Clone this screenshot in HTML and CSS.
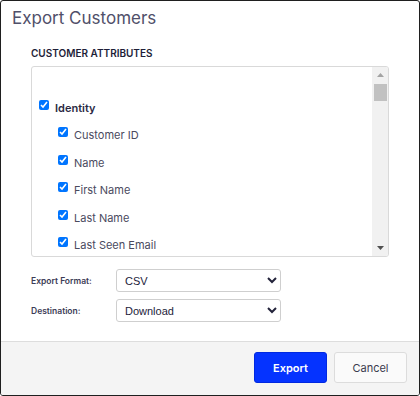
FILE: index.html
```html
<!DOCTYPE html>
<html lang="en">
<head>
    <meta charset="UTF-8">
    <meta name="viewport" content="width=device-width, initial-scale=1.0">
    <title>Export Customers</title>
    <link rel="stylesheet" href="styles.css">
</head>
<body>
    <div class="dialog">
        <div class="dialog-header">
            <h1>Export Customers</h1>
        </div>

        <div class="dialog-body">
            <h2 class="section-title">CUSTOMER ATTRIBUTES</h2>

            <!-- Attribute tree -->
            <div class="attr-list">
                <div class="attr-items">
                    <div class="attr-row spacer"></div>
                    <label class="attr-row group"><input type="checkbox" checked><span>Identity</span></label>
                    <label class="attr-row child"><input type="checkbox" checked><span>Customer ID</span></label>
                    <label class="attr-row child"><input type="checkbox" checked><span>Name</span></label>
                    <label class="attr-row child"><input type="checkbox" checked><span>First Name</span></label>
                    <label class="attr-row child"><input type="checkbox" checked><span>Last Name</span></label>
                    <label class="attr-row child"><input type="checkbox" checked><span>Last Seen Email</span></label>
                </div>
                <div class="scrollbar">
                    <div class="scroll-btn">
                        <svg width="7" height="4" viewBox="0 0 7 4"><polygon points="3.5,0 7,4 0,4" fill="#a3a3a3"/></svg>
                    </div>
                    <div class="scroll-track">
                        <div class="scroll-thumb"></div>
                    </div>
                    <div class="scroll-btn">
                        <svg width="7" height="4" viewBox="0 0 7 4"><polygon points="0,0 7,0 3.5,4" fill="#505050"/></svg>
                    </div>
                </div>
            </div>

            <!-- Export options -->
            <div class="option-row">
                <label class="option-label" for="format">Export Format:</label>
                <select id="format" class="option-select">
                    <option>CSV</option>
                    <option>JSON</option>
                </select>
            </div>
            <div class="option-row">
                <label class="option-label" for="destination">Destination:</label>
                <select id="destination" class="option-select">
                    <option>Download</option>
                    <option>Email</option>
                </select>
            </div>
        </div>

        <div class="dialog-footer">
            <button class="btn btn-primary">Export</button>
            <button class="btn btn-secondary">Cancel</button>
        </div>
    </div>
</body>
</html>
```

FILE: styles.css
```css
html, body {
    margin: 0;
    padding: 0;
}
body {
    font-family: Inter, "Noto Sans", sans-serif;
    background-color: #ffffff;
}
.dialog {
    width: 420px;
    height: 396px;
    box-sizing: border-box;
    border: 1px solid #1f1f1f;
    border-radius: 3px;
    display: flex;
    flex-direction: column;
    background-color: #ffffff;
    overflow: hidden;
}
.dialog-header {
    padding: 7px 11px 0;
}
.dialog-header h1 {
    margin: 0;
    font-size: 17px;
    line-height: 20px;
    font-weight: 400;
    color: #50506a;
}
.dialog-body {
    flex: 1;
    padding: 19px 30px 0;
}
.section-title {
    margin: 0 0 7px;
    font-size: 10px;
    line-height: 12px;
    font-weight: 600;
    color: #1e1e38;
}
.attr-list {
    height: 191px;
    box-sizing: border-box;
    border: 1px solid #d9d9d9;
    border-radius: 3px;
    display: flex;
    overflow: hidden;
}
.attr-items {
    flex: 1;
    overflow: hidden;
}
.scrollbar {
    width: 16px;
    background-color: #f1f1f1;
    display: flex;
    flex-direction: column;
}
.scroll-btn {
    height: 16px;
    display: flex;
    align-items: center;
    justify-content: center;
}
.scroll-btn svg {
    display: block;
}
.scroll-track {
    flex: 1;
    padding-top: 1px;
}
.scroll-thumb {
    height: 17px;
    margin: 0 1px 0 2px;
    background-color: #c1c1c1;
}
.attr-row {
    height: 27.4px;
    display: flex;
    align-items: center;
    gap: 6px;
    padding-left: 7px;
    font-size: 11px;
    color: #4a4a5e;
    cursor: pointer;
}
.attr-row input {
    width: 10px;
    height: 10px;
    margin: 0 0 6px;
    cursor: pointer;
}
.attr-row.group {
    font-weight: 600;
    color: #2a2a44;
}
.attr-row.child {
    padding-left: 26px;
}
.option-row {
    display: flex;
    align-items: center;
    margin-top: 7px;
}
.attr-list + .option-row {
    margin-top: 12px;
}
.option-label {
    width: 85px;
    font-size: 8.5px;
    font-weight: 600;
    color: #3c3c56;
}
.option-select {
    width: 165px;
    height: 23px;
    padding: 0 4px;
    border: 1px solid #cfcfcf;
    border-radius: 3px;
    background-color: #ffffff;
    font-family: "Liberation Sans", Arial, sans-serif;
    font-size: 11px;
    color: #22223a;
}
.dialog-footer {
    height: 54px;
    box-sizing: border-box;
    border-top: 1px solid #dddddd;
    background-color: #f4f4f4;
    display: flex;
    justify-content: flex-end;
    align-items: flex-start;
    gap: 7px;
    padding: 10px 12px 0;
}
.btn {
    width: 73px;
    height: 31px;
    border-radius: 3px;
    font-family: Inter, "Noto Sans", sans-serif;
    font-size: 11px;
    cursor: pointer;
}
.btn-primary {
    background-color: #0533ff;
    border: 1px solid #0029e0;
    color: #ffffff;
    font-weight: 600;
}
.btn-secondary {
    background-color: #fafafa;
    border: 1px solid #dcdcdc;
    color: #3a3a4e;
}
```
